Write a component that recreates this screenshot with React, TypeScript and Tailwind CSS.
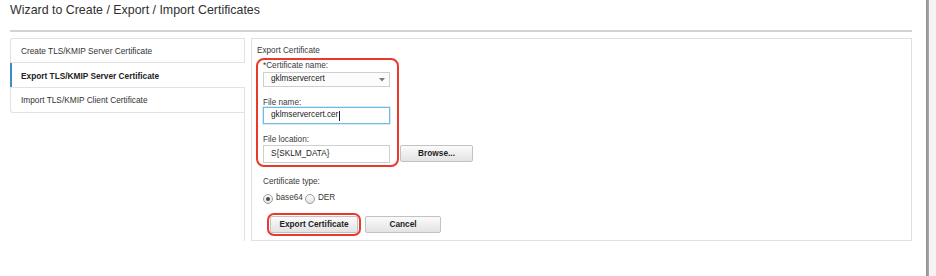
const font = "font-['Liberation_Sans',Arial,Helvetica,sans-serif]"

const Radio = ({ checked }: { checked?: boolean }) => (
  <span className="flex h-[10px] w-[10px] items-center justify-center rounded-full border border-[#9c9c9c] bg-gradient-to-b from-[#fdfdfd] to-[#e4e4e4]">
    {checked && <span className="h-[4px] w-[4px] rounded-full bg-[#4a4a4a]" />}
  </span>
)

const Label = ({ children, className = "" }: { children: React.ReactNode; className?: string }) => (
  <div className={`h-[10px] text-[8.2px] leading-[12px] text-[#3a3a3a] ${className}`}>{children}</div>
)

const buttonCls =
  "flex items-center justify-center rounded-[2px] border border-[#c2c2c2] bg-gradient-to-b from-[#fbfbfb] to-[#e3e3e3] text-[8.3px] font-bold text-[#1e1e1e]"

export default function App() {
  return (
    <div className={`flex h-[276px] w-[936px] overflow-hidden bg-white text-[#333] ${font}`}>
      <div className="flex-1 pl-[10px] pr-[14px]">
        <div className="h-[32px] border-b-2 border-[#d2d2d2] pt-[2px] text-[12.4px] leading-[16px] text-[#2f2f2f]">
          Wizard to Create / Export / Import Certificates
        </div>

        <div className="mt-[6px] flex h-[203px]">
          {/* left tabs */}
          <div className="w-[235px] border-r border-[#e2e2e2]">
            <div className="flex h-[25px] items-center rounded-tl-[3px] border-b border-l border-t border-[#e2e2e2] pl-[10px] pt-px text-[8.3px] text-[#333]">
              Create TLS/KMIP Server Certificate
            </div>
            <div className="relative -mr-px flex h-[24px] items-center border-l-2 border-[#3a8fc9] bg-white pl-[9px] pt-[2px] text-[8.3px] font-bold text-[#222]">
              Export TLS/KMIP Server Certificate
            </div>
            <div className="flex h-[26px] items-center rounded-bl-[3px] border-b border-l border-t border-[#e2e2e2] pl-[10px] pt-px text-[8.3px] text-[#333]">
              Import TLS/KMIP Client Certificate
            </div>
          </div>

          {/* form panel */}
          <div className="ml-[6px] flex-1 border border-[#e0e0e0] pl-[4px] pt-[6px]">
            <Label className="ml-px text-[#2f2f2f]">Export Certificate</Label>

            <div className="mt-[3px] flex items-end">
              <div className="w-[143px] rounded-[8px] border-2 border-[#e8392b] pb-[2px] pl-[5px] pr-[7px]">
                <Label>*Certificate name:</Label>
                <div className="mt-[2px] flex h-[15px] w-[127px] items-center justify-between border border-[#cfcfcf] bg-[#fcfcfc] pl-[7px] pr-[4px] text-[8.2px] text-[#222]">
                  <span>gklmservercert</span>
                  <svg width="6" height="4" viewBox="0 0 6 4">
                    <path d="M0 0 L6 0 L3 3.5 Z" fill="#7a7a7a" />
                  </svg>
                </div>

                <Label className="mt-[10px]">File name:</Label>
                <div className="flex h-[17px] w-[127px] items-center border border-[#6fbde5] bg-white pl-[7px] text-[8.2px] text-[#222] shadow-[0_0_0_0.5px_#a9d8f0]">
                  <span>gklmservercert.cer</span>
                  <span className="ml-px h-[10px] w-px bg-[#222]" />
                </div>

                <Label className="mt-[10px]">File location:</Label>
                <div className="mt-px flex h-[17.5px] w-[127px] items-center border border-[#cfcfcf] bg-white pl-[7px] text-[8.2px] text-[#222]">
                  S{"{"}SKLM_DATA{"}"}
                </div>
              </div>
              <button className={`mb-[4.5px] ml-px h-[17.5px] w-[73px] ${buttonCls}`}>Browse...</button>
            </div>

            <div className="pl-[7px]">
              <Label className="mt-[9px]">Certificate type:</Label>
              <div className="mt-[8px] flex h-[10px] items-center text-[8.2px] text-[#3a3a3a]">
                <Radio checked />
                <span className="ml-[3px]">base64</span>
                <span className="ml-[2px]">
                  <Radio />
                </span>
                <span className="ml-[3px]">DER</span>
              </div>
            </div>

            <div className="mt-[9px] flex items-center pl-[11px]">
              <div className="rounded-[7px] border-2 border-[#e8392b] p-px">
                <button className={`h-[17px] w-[88px] ${buttonCls}`}>Export Certificate</button>
              </div>
              <button className={`ml-[4px] h-[17px] w-[76px] ${buttonCls}`}>Cancel</button>
            </div>
          </div>
        </div>
      </div>

      {/* scrollbar edge */}
      <div className="w-[3px] bg-gradient-to-r from-[#8e8e8e] to-[#ababab]" />
      <div className="w-[7px] bg-[#f4f4f4]" />
    </div>
  )
}
